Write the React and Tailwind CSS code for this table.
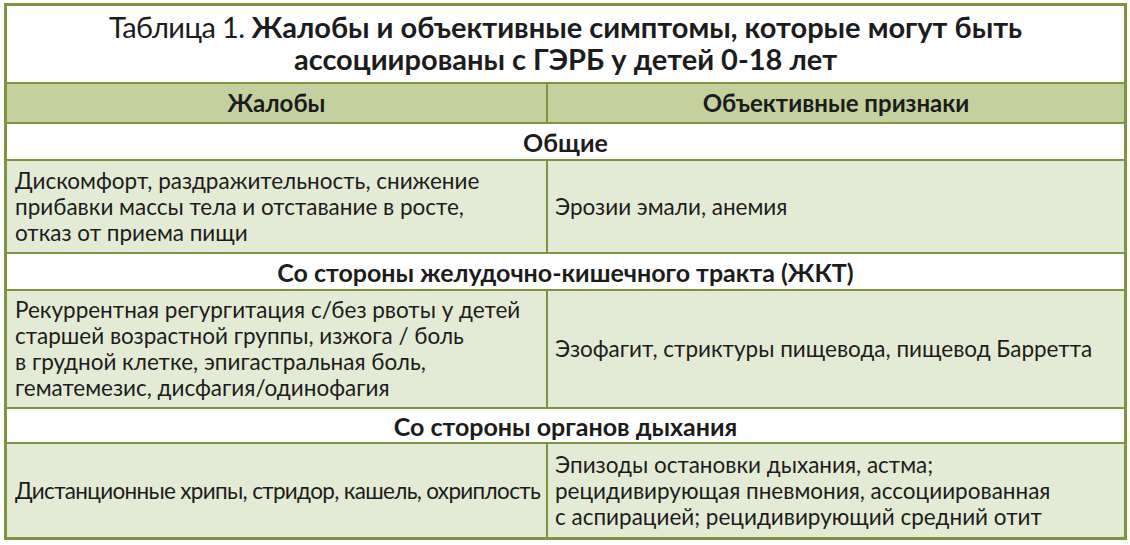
const line = "border-t-2 border-[#7f9440]";

function Section({ h, children }) {
  return (
    <div className={`${line} ${h} bg-white flex items-center justify-center text-[25px] leading-[30px] font-bold`}>
      {children}
    </div>
  );
}

function Row({ h, left, right, leftClass = "" }) {
  return (
    <div className={`${line} ${h} bg-[#e4ebd4] grid grid-cols-[539px_1fr] text-[22.5px] leading-[26px]`}>
      <div className={`flex items-center pl-[8px] pr-1 ${leftClass}`}>
        <div>{left}</div>
      </div>
      <div className="flex items-center border-l-2 border-[#7f9440] pl-[7px]">
        <div>{right}</div>
      </div>
    </div>
  );
}

export default function App() {
  return (
    <div
      className="w-[1130px] h-[545px] bg-white pl-[4px] pt-[3px] text-[#1c1c1c]"
      style={{ fontFamily: "Lato, 'Noto Sans', sans-serif" }}
    >
      <div className="w-[1123px] border-[3px] border-[#7f9440] flex flex-col">
        <div className="h-[76px] bg-white flex flex-col items-center justify-center text-[29px] leading-[32px] pb-[2px]">
          <div>
            <span className="font-normal tracking-[-0.02em]">Таблица 1. </span>
            <span className="font-bold">Жалобы и объективные симптомы, которые могут быть</span>
          </div>
          <div className="font-bold">ассоциированы с ГЭРБ у детей 0-18 лет</div>
        </div>

        <div className={`${line} h-[40px] bg-[#c4d19e] grid grid-cols-[539px_1fr] text-[24px] leading-[30px] font-bold`}>
          <div className="flex items-center justify-center">Жалобы</div>
          <div className="flex items-center justify-center border-l-2 border-[#7f9440]">Объективные признаки</div>
        </div>

        <Section h="h-[37px]">Общие</Section>

        <Row
          h="h-[93px]"
          left={
            <>
              Дискомфорт, раздражительность, снижение
              <br />
              прибавки массы тела и отставание в росте,
              <br />
              отказ от приема пищи
            </>
          }
          right="Эрозии эмали, анемия"
        />

        <Section h="h-[37px]">Со стороны желудочно-кишечного тракта (ЖКТ)</Section>

        <Row
          h="h-[118px]"
          left={
            <>
              Рекуррентная регургитация с/без рвоты у детей
              <br />
              старшей возрастной группы, изжога / боль
              <br />
              в грудной клетке, эпигастральная боль,
              <br />
              гематемезис, дисфагия/одинофагия
            </>
          }
          right="Эзофагит, стриктуры пищевода, пищевод Барретта"
        />

        <Section h="h-[35px]">Со стороны органов дыхания</Section>

        <Row
          h="h-[95px]"
          leftClass="tracking-[-0.03em] whitespace-nowrap"
          left="Дистанционные хрипы, стридор, кашель, охриплость"
          right={
            <>
              Эпизоды остановки дыхания, астма;
              <br />
              рецидивирующая пневмония, ассоциированная
              <br />
              с аспирацией; рецидивирующий средний отит
            </>
          }
        />
      </div>
    </div>
  );
}
